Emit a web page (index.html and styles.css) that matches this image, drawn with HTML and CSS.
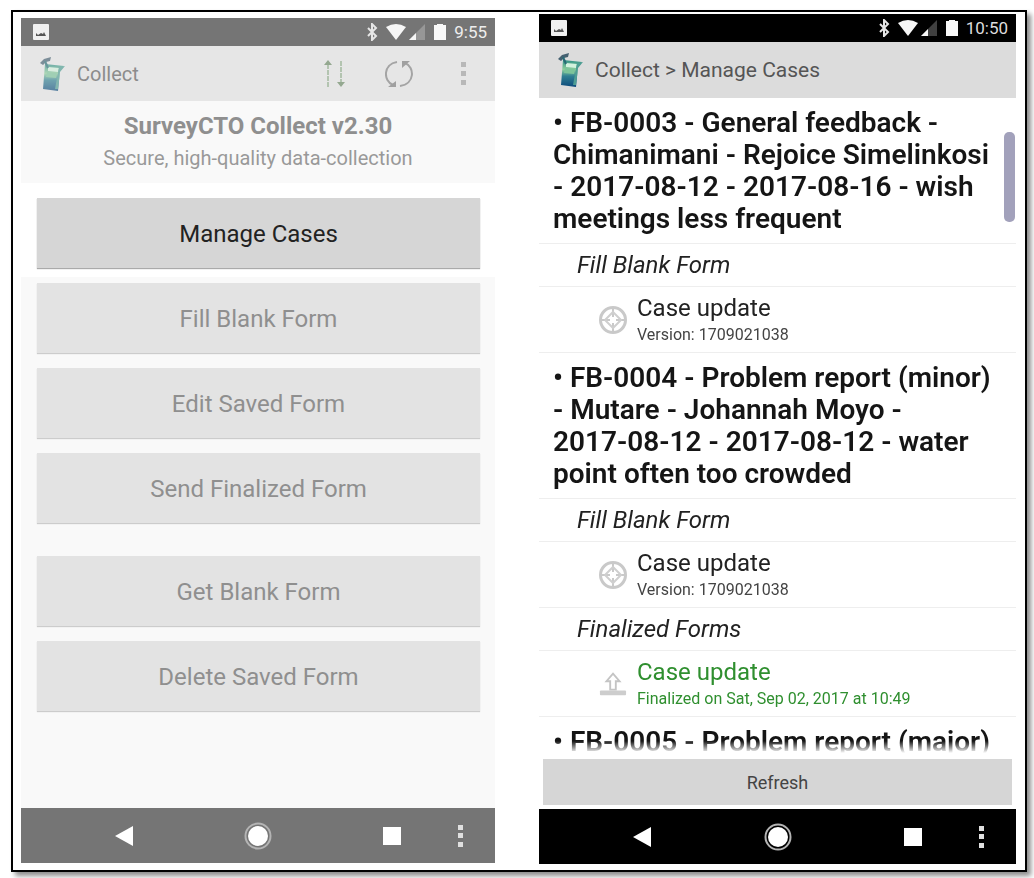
FILE: index.html
```html
<!DOCTYPE html>
<html lang="en">
<head>
<meta charset="utf-8">
<title>SurveyCTO Collect</title>
<link rel="stylesheet" href="styles.css">
</head>
<body>
<svg class="defs" aria-hidden="true">
  <defs>
    <linearGradient id="cup" x1="0" y1="0" x2="0" y2="1">
      <stop offset="0" stop-color="#2f8f86"/><stop offset=".35" stop-color="#8fcf9c"/><stop offset=".6" stop-color="#2f7f92"/><stop offset="1" stop-color="#0d4a7c"/>
    </linearGradient>
  </defs>
  <symbol id="logo" viewBox="0 0 28 36">
    <path d="M6 8l19 2-4 5-2 20-15-2z" fill="url(#cup)"/>
    <path d="M9 11l11 1-1 4-10-1z" fill="#d4f2de"/>
    <path d="M8 16l10 1-1 5-10-1z" fill="#7cc49a"/>
    <path d="M20 11l6-1-5 6-2 17-3 0z" fill="#4e9d93"/>
    <path d="M1 7l4-4 7-2-1 4-4 1-3 3z" fill="#456070"/>
    <path d="M6 5l3 7" stroke="#286a74" stroke-width="2"/>
  </symbol>
  <symbol id="picture" viewBox="0 0 16 16">
    <rect width="16" height="16" rx="1" fill="#f0f0f0"/>
    <path d="M3 12V9l2 2 3-2 2 1 1-2 2 4z" fill="#555"/>
  </symbol>
  <symbol id="bluetooth" viewBox="0 0 12 18">
    <path d="M2 5l8 8-4 4V1l4 4-8 8" fill="none" stroke="#e6e6e6" stroke-width="2"/>
  </symbol>
  <symbol id="wifi" viewBox="0 0 20 16">
    <path d="M0 3Q10-3 20 3L10 16z" fill="#f6f6f6"/>
  </symbol>
  <symbol id="signal" viewBox="0 0 16 16">
    <path d="M16 0v16H0z" fill="#fff" opacity=".25"/><path d="M7 9v7H0z" fill="#f6f6f6"/>
  </symbol>
  <symbol id="battery" viewBox="0 0 12 16">
    <path d="M3 0h6v1h3v15H0V1h3z" fill="#f8f8f8"/>
  </symbol>
  <symbol id="back" viewBox="0 0 44 44"><path d="M13 22l18-10v20z" fill="#fff"/></symbol>
  <symbol id="home" viewBox="0 0 44 44"><circle cx="22" cy="22" r="12.5" fill="none" stroke="#b4b4b4" stroke-width="2"/><circle cx="22" cy="22" r="10" fill="#fff"/></symbol>
  <symbol id="recents" viewBox="0 0 44 44"><rect x="13" y="13" width="18" height="18" fill="#fff"/></symbol>
  <symbol id="more" viewBox="0 0 44 44"><path d="M20 11h5v5h-5zM20 19h5v5h-5zM20 28h5v5h-5z" fill="#e0e0e0"/></symbol>
  <symbol id="target" viewBox="0 0 28 28">
    <circle cx="14" cy="14" r="12.5" fill="none" stroke="#c9c9c9" stroke-width="3"/>
    <path d="M14 3v8M14 17v8M3 14h8M17 14h8" stroke="#c9c9c9" stroke-width="2"/>
    <path d="M14 6l4 4 4 4-4 4-4 4-4-4-4-4 4-4z" fill="none" stroke="#cfcfcf" stroke-width="2"/>
  </symbol>
  <symbol id="upload" viewBox="0 0 30 28">
    <path d="M15 3l7 8h-4v9h-6v-9H8z" fill="#fff" stroke="#c4c4c4" stroke-width="2"/>
    <rect x="1" y="21" width="28" height="5" rx="1" fill="#cdcdcd"/>
  </symbol>
</svg>

<main class="frame">
  <section class="phone phone-dim" aria-label="Collect home">
    <div class="status">
      <svg class="i-picture"><use href="#picture"/></svg>
      <div class="status-right">
        <svg class="i-bluetooth"><use href="#bluetooth"/></svg>
        <svg class="i-wifi"><use href="#wifi"/></svg>
        <svg class="i-signal"><use href="#signal"/></svg>
        <svg class="i-battery"><use href="#battery"/></svg>
        <span>9:55</span>
      </div>
    </div>
    <header class="appbar">
      <svg class="i-logo"><use href="#logo"/></svg>
      <span class="appbar-title">Collect</span>
      <div class="actions">
        <button type="button" aria-label="Sort">
          <svg viewBox="0 0 28 32"><g fill="none" stroke="#b3c4b0" stroke-width="2"><path d="M7 6v24M20 3v24" stroke-dasharray="5 1"/></g><path d="M7 2l4 5H3zM20 29l4-5h-8z" fill="#94a890"/></svg>
        </button>
        <button type="button" aria-label="Sync">
          <svg viewBox="0 0 28 32"><g fill="none" stroke="#a4a4a4" stroke-width="2"><path d="M12 4C-2 6-2 23 8 27M15 28C30 26 30 9 20 5"/></g><path d="M3 29l8-6v6zM25 3l-8 0 0 7z" fill="#a0a0a0"/></svg>
        </button>
        <button type="button" aria-label="More options">
          <svg viewBox="0 0 28 32"><path d="M12 4h5v5h-5zM12 13h5v5h-5zM12 22h5v5h-5z" fill="#b8b8b8"/></svg>
        </button>
      </div>
    </header>
    <div class="intro">
      <h1>SurveyCTO Collect v2.30</h1>
      <p>Secure, high-quality data-collection</p>
    </div>
    <div class="spotlight">
      <button type="button" class="menu-btn active">Manage Cases</button>
    </div>
    <div class="menu">
      <button type="button" class="menu-btn">Fill Blank Form</button>
      <button type="button" class="menu-btn">Edit Saved Form</button>
      <button type="button" class="menu-btn">Send Finalized Form</button>
      <button type="button" class="menu-btn apart">Get Blank Form</button>
      <button type="button" class="menu-btn">Delete Saved Form</button>
    </div>
    <nav class="navbar" aria-label="System">
      <button type="button" aria-label="Back"><svg><use href="#back"/></svg></button>
      <button type="button" aria-label="Home"><svg><use href="#home"/></svg></button>
      <div class="nav-pair">
        <button type="button" aria-label="Recents"><svg><use href="#recents"/></svg></button>
        <button type="button" aria-label="Menu"><svg><use href="#more"/></svg></button>
      </div>
    </nav>
  </section>

  <section class="phone phone-cases" aria-label="Manage Cases">
    <div class="status">
      <svg class="i-picture"><use href="#picture"/></svg>
      <div class="status-right">
        <svg class="i-bluetooth"><use href="#bluetooth"/></svg>
        <svg class="i-wifi"><use href="#wifi"/></svg>
        <svg class="i-signal"><use href="#signal"/></svg>
        <svg class="i-battery"><use href="#battery"/></svg>
        <span>10:50</span>
      </div>
    </div>
    <header class="appbar">
      <svg class="i-logo"><use href="#logo"/></svg>
      <span class="appbar-title">Collect &gt; Manage Cases</span>
    </header>
    <div class="list-wrap">
      <div class="list">
        <h2>• FB-0003 - General feedback - Chimanimani - Rejoice Simelinkosi <span class="date">- 2017-08-12</span> - <span class="date">2017-08-16</span> - wish meetings less frequent</h2>
        <h3>Fill Blank Form</h3>
        <div class="item">
          <svg class="i-item"><use href="#target"/></svg>
          <div><strong>Case update</strong><small>Version: 1709021038</small></div>
        </div>
        <h2>• FB-0004 - Problem report (minor) - Mutare - Johannah Moyo - <span class="date">2017-08-12</span> - <span class="date">2017-08-12</span> - water point often too crowded</h2>
        <h3>Fill Blank Form</h3>
        <div class="item">
          <svg class="i-item"><use href="#target"/></svg>
          <div><strong>Case update</strong><small>Version: 1709021038</small></div>
        </div>
        <h3>Finalized Forms</h3>
        <div class="item done">
          <svg class="i-item"><use href="#upload"/></svg>
          <div><strong>Case update</strong><small>Finalized on Sat, Sep 02, 2017 at 10:49</small></div>
        </div>
        <h2>• FB-0005 - Problem report (major)</h2>
      </div>
      <div class="thumb"></div>
    </div>
    <div class="footer"><button type="button" class="refresh">Refresh</button></div>
    <nav class="navbar" aria-label="System">
      <button type="button" aria-label="Back"><svg><use href="#back"/></svg></button>
      <button type="button" aria-label="Home"><svg><use href="#home"/></svg></button>
      <div class="nav-pair">
        <button type="button" aria-label="Recents"><svg><use href="#recents"/></svg></button>
        <button type="button" aria-label="Menu"><svg><use href="#more"/></svg></button>
      </div>
    </nav>
  </section>
</main>
</body>
</html>
```
FILE: styles.css
```css
* { box-sizing: border-box; }
body {
  margin: 0;
  padding: 10px 7px 6px 11px;
  background: #fff;
  color: #222;
  font-family: Roboto, "Liberation Sans", sans-serif;
}
button { border: 0; padding: 0; background: none; font: inherit; color: inherit; }
h1, h2, h3, p { margin: 0; }
svg { display: block; flex: none; }
.defs { position: absolute; width: 0; height: 0; }

.frame {
  display: grid;
  grid-template-columns: 474fr 477fr;
  gap: 44px;
  height: calc(100vh - 16px);
  padding: 2px 9px 6px 8px;
  border: 2px solid #000;
  background: #fff;
  box-shadow: 4px 4px 5px rgba(0, 0, 0, .45);
}
.phone { display: flex; flex-direction: column; min-width: 0; min-height: 0; }
.phone-dim { padding: 4px 0 1px; }

.status {
  display: flex;
  align-items: center;
  justify-content: space-between;
  flex: none;
  height: 28px;
  padding: 0 8px 0 12px;
  background: #000;
  color: #ddd;
  font-size: 17px;
}
.phone-dim .status { background: #757575; color: #eee; }
.status-right { display: flex; align-items: center; }
.i-picture { width: 16px; height: 16px; }
.i-bluetooth { width: 12px; height: 18px; margin-right: 8px; }
.i-wifi { width: 20px; height: 16px; margin-right: 3px; }
.i-signal { width: 16px; height: 16px; margin-right: 9px; }
.i-battery { width: 12px; height: 16px; margin-right: 8px; }

.appbar {
  display: flex;
  align-items: center;
  flex: none;
  height: 56px;
  padding: 0 18px;
  background: #dcdcdc;
  color: #555;
  font-size: 21px;
}
.i-logo { width: 28px; height: 36px; margin-right: 10px; }
.phone-dim .appbar { height: 55px; background: #e6e6e6; color: #8c8c8c; font-size: 20px; }
.phone-dim .i-logo { opacity: .65; }
.actions { display: flex; gap: 36px; margin-left: auto; }
.actions svg { width: 28px; height: 32px; }

.intro {
  flex: none;
  height: 82px;
  padding-top: 9px;
  background: #f9f9f9;
  color: #999;
  text-align: center;
}
.intro h1 { font-size: 24px; line-height: 32px; font-weight: 700; color: #8f8f8f; }
.intro p { font-size: 20px; line-height: 32px; }
.spotlight { padding: 15px 15px 9px 16px; }
.menu {
  display: flex;
  flex-direction: column;
  gap: 15px;
  flex: 1;
  padding: 6px 15px 0 16px;
  background: #f9f9f9;
}
.menu-btn {
  width: 100%;
  height: 70px;
  padding-top: 2px;
  background: #e3e3e3;
  color: #8f8f8f;
  font-size: 24px;
  box-shadow: 0 1px 1px #ccc;
}
.menu-btn.active { display: block; background: #d6d6d6; color: #222; box-shadow: 0 1px 1px #aaa; }
.menu-btn.apart { margin-top: 18px; }

.navbar {
  display: flex;
  align-items: center;
  justify-content: space-between;
  flex: none;
  height: 55px;
  padding: 0 13px 0 81px;
  background: #000;
}
.phone-dim .navbar { background: #757575; }
.navbar svg { width: 44px; height: 44px; }
.nav-pair { display: flex; gap: 24px; }

.list-wrap { position: relative; flex: 1; min-height: 0; }
.list {
  height: 100%;
  overflow: hidden;
  -webkit-mask-image: linear-gradient(to top, transparent 0, #000 12px);
  mask-image: linear-gradient(to top, transparent 0, #000 12px);
}
.list h2 {
  padding: 9px 20px 8px 14px;
  border-bottom: 1px solid #eee;
  color: #151515;
  font-size: 28px;
  line-height: 32px;
  font-weight: 600;
}
.date { white-space: nowrap; }
.list h3 {
  padding-left: 38px;
  border-bottom: 1px solid #eee;
  font-size: 24px;
  line-height: 42px;
  font-weight: 400;
  font-style: italic;
}
.item {
  display: flex;
  align-items: center;
  gap: 10px;
  height: 66px;
  padding-left: 60px;
  border-bottom: 1px solid #eee;
}
.i-item { width: 28px; height: 28px; }
.item strong { display: block; font-size: 24px; line-height: 30px; font-weight: 400; }
.item small { display: block; font-size: 16px; line-height: 24px; color: #444; }
.item.done strong, .item.done small { color: #2f8f2f; }
.thumb {
  position: absolute;
  top: 34px;
  right: 1px;
  width: 11px;
  height: 90px;
  border-radius: 5px;
  background: #a2a1bb;
}
.footer { flex: none; padding: 6px 4px 4px; }
.refresh { display: block; width: 100%; height: 46px; background: #d6d6d6; color: #444; font-size: 18px; }
```
